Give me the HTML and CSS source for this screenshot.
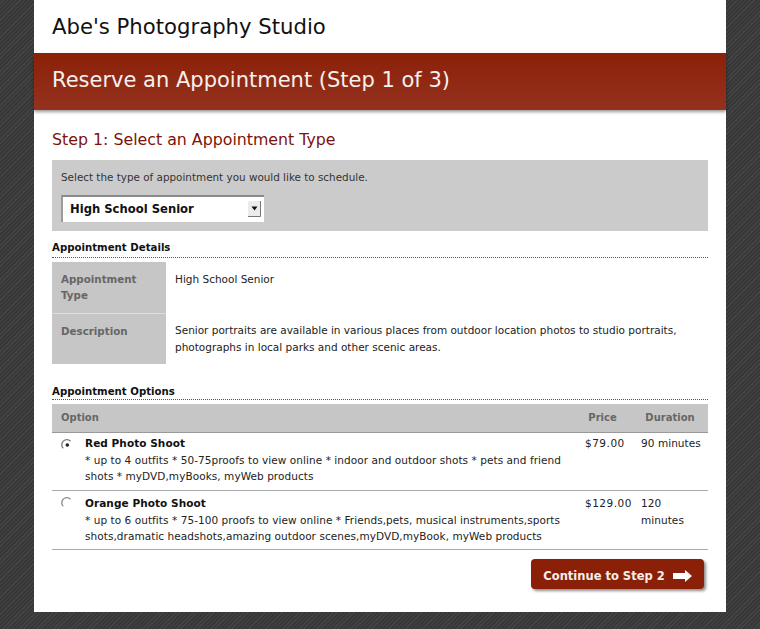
FILE: index.html
```html
<!DOCTYPE html>
<html lang="en">
<head>
<meta charset="utf-8">
<title>Reserve an Appointment</title>
<link rel="stylesheet" href="styles.css">
</head>
<body>
<div class="page">
  <header class="site-header">Abe's Photography Studio</header>
  <div class="band"><h1>Reserve an Appointment (Step 1 of 3)</h1></div>
  <main class="content">
    <h2>Step 1: Select an Appointment Type</h2>
    <section class="chooser">
      <p>Select the type of appointment you would like to schedule.</p>
      <div class="select">
        <span>High School Senior</span>
        <svg class="select-arrow" width="13" height="16" viewBox="0 0 13 16"><rect x="0" y="0" width="13" height="16" fill="#ececec"/><path d="M0 15.500H12.500V0" fill="none" stroke="#777"/><path d="M3.500 5.500h6L6.500 9.500z" fill="#111"/></svg>
      </div>
    </section>
    <h3>Appointment Details</h3>
    <table class="details">
      <tr><th>Appointment Type</th><td>High School Senior</td></tr>
      <tr><th>Description</th><td>Senior portraits are available in various places from outdoor location photos to studio portraits, photographs in local parks and other scenic areas.</td></tr>
    </table>
    <h3 class="options-title">Appointment Options</h3>
    <table class="options">
      <colgroup><col class="c-radio"><col class="c-name"><col class="c-price"><col class="c-dur"></colgroup>
      <thead><tr><th colspan="2" class="left">Option</th><th class="price-head">Price</th><th>Duration</th></tr></thead>
      <tbody>
        <tr>
          <td class="radio"><svg width="12" height="12" viewBox="0 0 12 12"><path d="M9.500 2.200A5 5 0 0 0 2.200 9.300" fill="none" stroke="#777" stroke-width="1.300"/><circle cx="6.300" cy="6" r="1.800" fill="#222"/></svg></td>
          <td><b>Red Photo Shoot</b><br>* up to 4 outfits * 50-75proofs to view online * indoor and outdoor shots * pets and friend shots * myDVD,myBooks, myWeb products</td>
          <td class="price">$79.00</td><td>90 minutes</td>
        </tr>
        <tr>
          <td class="radio"><svg width="12" height="12" viewBox="0 0 12 12"><path d="M9.500 2.200A5 5 0 0 0 2.200 9.300" fill="none" stroke="#888" stroke-width="1.300"/></svg></td>
          <td><b>Orange Photo Shoot</b><br>* up to 6 outfits * 75-100 proofs to view online * Friends,pets, musical instruments,sports shots,dramatic headshots,amazing outdoor scenes,myDVD,myBook, myWeb products</td>
          <td class="price">$129.00</td><td>120 minutes</td>
        </tr>
      </tbody>
    </table>
    <div class="actions">
      <button class="continue" type="button">Continue to Step 2
        <svg width="19" height="12" viewBox="0 0 19 12"><path d="M0 3H12V0L19 6L12 12V9H0z" fill="#fff"/></svg>
      </button>
    </div>
  </main>
</div>
</body>
</html>
```
FILE: styles.css
```css
* { box-sizing: border-box; }
html, body { margin: 0; height: 629px; overflow: hidden; }
body {
  background: repeating-linear-gradient(135deg, #383838 0, #383838 2px, #444 2px, #444 3px);
  font-family: "DejaVu Sans", sans-serif;
  font-size: 10.5px;
  line-height: 16.5px;
  color: #222;
}
.page {
  width: 692px;
  height: 612px;
  margin: 0 auto;
  background: #fff;
}
.site-header {
  height: 54px;
  padding: 12px 18px 0;
  font-size: 21.200px;
  line-height: 30px;
  color: #111;
  border-bottom: 1px solid #666;
}
.band {
  height: 57px;
  margin-top: -1px;
  padding: 0 18px;
  background: linear-gradient(#8c2008, #93321e);
  box-shadow: 0 2px 3px rgba(0, 0, 0, .4);
  display: flex;
  align-items: center;
}
.band h1 {
  margin: 0 0 3px;
  font-size: 21px;
  font-weight: normal;
  color: #f6f0ee;
}
.content { padding: 0 18px; }
h2 {
  margin: 19px 0 10px;
  font-size: 15.800px;
  line-height: 21px;
  font-weight: normal;
  color: #7d1208;
}
.chooser {
  height: 71px;
  padding: 9px;
  background: #cbcbcb;
}
.chooser p { margin: 0 0 9px; font-size: 10.400px; color: #333; }
.select {
  width: 203px;
  height: 27px;
  padding-left: 7px;
  background: #fff;
  border-top: 2px solid #8a8a8a;
  border-left: 2px solid #9a9a9a;
  display: flex;
  align-items: center;
  justify-content: space-between;
  font-size: 11.600px;
  font-weight: bold;
  color: #111;
}
.select-arrow { margin-right: 3px; }
h3 {
  margin: 8px 0 4px;
  height: 19px;
  font-size: 10.200px;
  line-height: 18px;
  font-weight: bold;
  color: #111;
  border-bottom: 1px dotted #555;
}
table { width: 100%; border-collapse: collapse; table-layout: fixed; }
.details th, .options th { color: #666; font-weight: bold; font-size: 10.300px; }
.details th {
  width: 114px;
  padding: 9px;
  line-height: 16px;
  background: #c6c6c6;
  border-bottom: 1px solid #ddd;
  text-align: left;
  vertical-align: top;
}
.details td { padding: 9px 9px 8px; vertical-align: top; }
.details tr:first-child > * { height: 51px; }
.details tr:last-child th { border-bottom: 0; height: 51px; }
h3.options-title { margin-top: 18px; height: 18px; line-height: 17px; padding-top: 1px; }
.c-radio { width: 24px; }
.c-price { width: 56px; }
.c-dur { width: 76px; }
.options th {
  height: 28px;
  padding: 0;
  background: #c6c6c6;
  border-bottom: 1px solid #999;
  text-align: center;
  font-size: 10px;
}
.options th.left { text-align: left; padding-left: 9px; }
.options th.price-head { padding-right: 3px; }
.options td {
  padding: 4px 0 4px 9px;
  vertical-align: top;
  border-bottom: 1px solid #aaa;
  letter-spacing: .06px;
}
.options tbody tr:first-child td:not(.radio) { padding-top: 2.500px; padding-bottom: 5.500px; }
.options td.price { letter-spacing: .5px; }
.options td:last-child { padding-right: 5px; }
.options b { color: #111; }
.options tbody td.radio { padding-top: 6px; line-height: 0; }
.actions { display: flex; justify-content: flex-end; padding: 9px 4px 0 0; }
.continue {
  width: 173px;
  height: 30px;
  padding: 4px 0 0;
  border: 0;
  border-radius: 4px;
  background: #8b2008;
  box-shadow: 2px 2px 3px rgba(0, 0, 0, .45);
  color: #f6eeea;
  font: bold 11.500px "DejaVu Sans", sans-serif;
  display: flex;
  align-items: center;
  justify-content: center;
  gap: 8px;
}
```
